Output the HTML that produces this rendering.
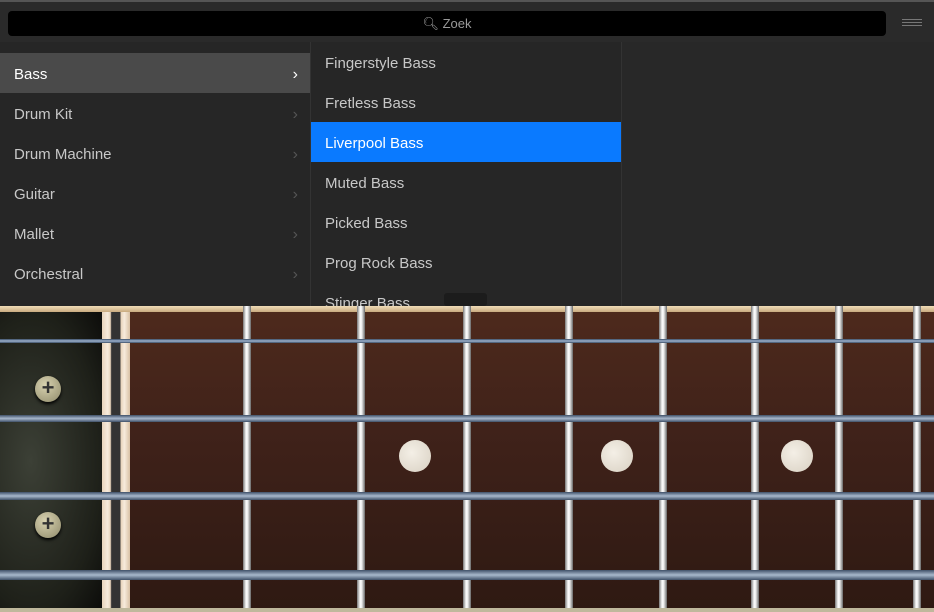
<!DOCTYPE html>
<html><head><style>
*{margin:0;padding:0;box-sizing:border-box}
body{width:934px;height:612px;overflow:hidden;background:#262626;font-family:"Liberation Sans",sans-serif;position:relative}
.top{position:absolute;left:0;top:0;width:934px;height:42px;background:#2a2a2a;border-top:2px solid #555}
.search{position:absolute;left:8px;top:9px;width:878px;height:25px;background:#000;border-radius:4px;color:#9a9a9a;font-size:13px;text-align:center;line-height:25px}
.menu{position:absolute;left:902px;top:17px;width:20px}
.menu i{display:block;height:1px;background:#777;margin-bottom:2px}
.col{position:absolute;top:42px;height:264px;background:#262626}
.c1{left:0;width:310px}
.c2{left:310px;width:311px;border-left:1px solid #333}
.c3{left:621px;width:313px;border-left:1px solid #333;background:#282828}
.r{position:absolute;left:0;width:100%;height:40px;line-height:44px;color:#c8c8c8;font-size:15px;padding-left:14px}
.r .ch{position:absolute;right:12px;top:0;color:#555;font-size:16px}
.sel1{background:#4a4a4a;color:#fff}
.sel1 .ch{color:#fff}
.sel2{background:#0a7aff;color:#fff}
.board{position:absolute;left:0;top:306px;width:934px;height:306px;overflow:hidden;background:linear-gradient(#4e2a1c,#40221a 40%,#2e1912)}
.bind{position:absolute;left:0;top:0;width:934px;height:6px;background:linear-gradient(#f0dcb8,#c9ab80)}
.bot{position:absolute;left:0;bottom:0;width:934px;height:4px;background:#bfb89c}
.head{position:absolute;left:0;top:6px;width:102px;height:298px;background:radial-gradient(ellipse at 30% 50%,#3c4036,#1e2019 70%,#0c0c0a)}
.nut{position:absolute;left:102px;top:6px;width:28px;height:298px;background:linear-gradient(90deg,#e8d4bc,#f7ebdc 20%,#e8d4bc 30%,#333 34%,#333 64%,#e8d4bc 68%,#f7ebdc 80%,#d8c0a4)}
.fret{position:absolute;top:0;width:8px;height:302px;background:linear-gradient(90deg,#777,#eee 35%,#fff 50%,#ccc 70%,#666)}
.str{position:absolute;left:0;width:934px}
.dot{position:absolute;width:32px;height:32px;border-radius:50%;background:radial-gradient(circle at 40% 40%,#f4efe6,#d8d0c2)}
.screw{position:absolute;width:26px;height:26px;border-radius:50%;background:radial-gradient(circle at 40% 35%,#d8d2b0,#8f8a6a);box-shadow:0 2px 3px #000;color:#333;font-size:22px;line-height:24px;text-align:center;font-weight:bold}
.handle{position:absolute;left:444px;top:293px;width:43px;height:13px;background:#1c1c1c;border-radius:3px}
</style></head><body>
<div class="top"><div class="search">&#x1F50D;&#xFE0E; Zoek</div><div class="menu"><i></i><i></i><i></i></div></div>
<div class="col c1">
<div class="r sel1" style="top:11px">Bass<span class="ch">›</span></div>
<div class="r" style="top:51px">Drum Kit<span class="ch">›</span></div>
<div class="r" style="top:91px">Drum Machine<span class="ch">›</span></div>
<div class="r" style="top:131px">Guitar<span class="ch">›</span></div>
<div class="r" style="top:171px">Mallet<span class="ch">›</span></div>
<div class="r" style="top:211px">Orchestral<span class="ch">›</span></div>
</div>
<div class="col c2">
<div class="r" style="top:0">Fingerstyle Bass</div>
<div class="r" style="top:40px">Fretless Bass</div>
<div class="r sel2" style="top:80px">Liverpool Bass</div>
<div class="r" style="top:120px">Muted Bass</div>
<div class="r" style="top:160px">Picked Bass</div>
<div class="r" style="top:200px">Prog Rock Bass</div>
<div class="r" style="top:240px">Stinger Bass</div>
</div>
<div class="col c3"></div>
<div class="handle"></div>
<div class="board">
<div class="bind"></div>
<div class="head"></div>
<div class="screw" style="left:35px;top:70px">+</div>
<div class="screw" style="left:35px;top:206px">+</div>
<div class="nut"></div>
<div class="fret" style="left:243px"></div>
<div class="fret" style="left:357px"></div>
<div class="fret" style="left:463px"></div>
<div class="fret" style="left:565px"></div>
<div class="fret" style="left:659px"></div>
<div class="fret" style="left:751px"></div>
<div class="fret" style="left:835px"></div>
<div class="fret" style="left:913px"></div>
<div class="dot" style="left:399px;top:134px"></div>
<div class="dot" style="left:601px;top:134px"></div>
<div class="dot" style="left:781px;top:134px"></div>
<div class="str" style="top:33px;height:4px;background:linear-gradient(#3a4d66,#9fb4cf,#3a4d66)"></div>
<div class="str" style="top:109px;height:7px;background:linear-gradient(#3f5068,#a8b8cc,#3f5068)"></div>
<div class="str" style="top:186px;height:8px;background:linear-gradient(#3f5068,#a8b8cc,#3f5068)"></div>
<div class="str" style="top:264px;height:10px;background:linear-gradient(#3f5068,#a8b8cc,#3f5068)"></div>
<div class="bot"></div>
</div>
</body></html>
